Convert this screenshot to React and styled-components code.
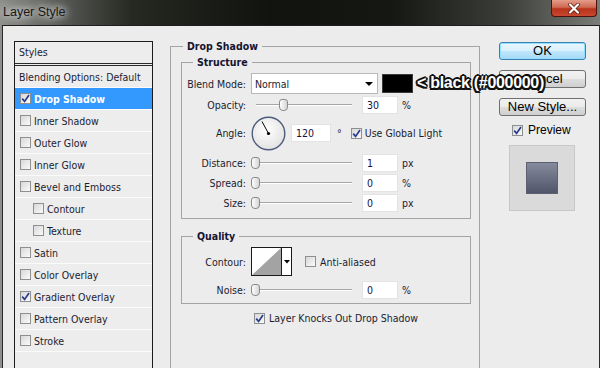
import React from 'react';
import styled, { createGlobalStyle, css } from 'styled-components';

const UI_FONT = `"DejaVu Sans Condensed", "DejaVu Sans", sans-serif`;
const BTN_FONT = `"Liberation Sans", Arial, sans-serif`;

const GlobalStyle = createGlobalStyle`
  html, body { margin: 0; padding: 0; background: #ececec; }
  body { width: 600px; height: 368px; overflow: hidden; }
`;

const Window = styled.div`
  width: 600px;
  height: 368px;
  display: flex;
  flex-direction: column;
  overflow: hidden;
  background: linear-gradient(90deg, #8e908c 0%, #5c5f5a 9%, #262922 22%, #10130e 45%, #141712 65%, #3a3d38 84%, #7a7c78 100%);
  font-family: ${UI_FONT};
  font-stretch: condensed;
  font-size: 10.5px;
  color: #1c1c30;
`;

const TitleBar = styled.div`
  height: 25px;
  flex: none;
  display: flex;
  align-items: flex-start;
  justify-content: space-between;
`;

const Title = styled.div`
  margin: 5px 0 0 3px;
  font-family: ${BTN_FONT};
  font-size: 12.5px;
  color: #161616;
  text-shadow: 0 0 6px #e6e6e6, 0 0 10px #d0d0d0, 0 0 14px #bdbdbd;
`;

const CloseButton = styled.div`
  width: 46px;
  height: 17px;
  margin-right: 3px;
  box-sizing: border-box;
  border: 1px solid #4a140c;
  border-top: none;
  border-radius: 0 0 4px 4px;
  background: linear-gradient(#e39c88 0%, #cf6a52 45%, #b8321c 55%, #c9482e 100%);
  display: flex;
  align-items: center;
  justify-content: center;
`;

const Body = styled.div`
  flex: 1;
  position: relative;
  display: flex;
  align-items: flex-start;
  margin-left: 2px;
  padding-left: 11px;
  background: #ececec;
  border-top: 1px solid #1e1e1e;
  border-left: 1px solid #2a2a2a;
  border-right: 1px solid #2a2a2a;
  overflow: hidden;
`;

/* ---- left styles list ---- */

const StylesPanel = styled.div`
  flex: none;
  width: 139px;
  height: 400px;
  margin-top: 15px;
  box-sizing: border-box;
  border: 1px solid #1c1c1c;
  background: #ededed;
`;

const PanelHeader = styled.div`
  height: 21px;
  line-height: 21px;
  padding-left: 4px;
  border-bottom: 3px double #2a2a2a;
`;

const StyleRow = styled.div`
  height: 21px;
  display: flex;
  align-items: center;
  gap: 3px;
  padding-left: ${p => p.$indent}px;
  border-bottom: 1px solid #fbfbfb;
  ${p => p.$selected && css`
    background: #3399ff;
    color: #fff;
    font-weight: bold;
  `}
`;

/* ---- group boxes ---- */

const Group = styled.fieldset`
  margin: 0;
  padding: 0;
  box-sizing: border-box;
  border: 1px solid #a4a4a4;
  min-width: 0;
`;

const MainGroup = styled(Group)`
  flex: none;
  width: 310px;
  height: 420px;
  margin: 13px 0 0 17px;
`;

const SubGroup = styled(Group)`
  width: 290px;
  margin: ${p => p.$top}px 0 0 10px;
  padding-bottom: ${p => p.$bottom}px;
`;

const Legend = styled.legend`
  margin-left: ${p => p.$offset}px;
  padding: 0 4px;
  line-height: 14px;
  font-weight: bold;
  color: #141430;
`;

const Row = styled.div`
  display: flex;
  align-items: center;
  height: ${p => p.$h}px;
  margin-top: ${p => p.$mt || 0}px;
`;

const Label = styled.div`
  flex: none;
  width: 64px;
  margin-right: 5px;
  text-align: right;
`;

const Select = styled.div`
  flex: none;
  width: 127px;
  height: 21px;
  box-sizing: border-box;
  display: flex;
  align-items: center;
  justify-content: space-between;
  padding: 0 4px 0 3px;
  background: #fff;
  border: 1px solid #b9b9b9;
`;

const DownArrow = styled.span`
  width: 0;
  height: 0;
  border-left: 4px solid transparent;
  border-right: 4px solid transparent;
  border-top: 4px solid #000;
`;

const Swatch = styled.div`
  flex: none;
  width: 31px;
  height: 19px;
  margin-left: 4px;
  box-sizing: border-box;
  background: #000;
  border: 1px solid #3a3a3a;
`;

const SliderWrap = styled.div`
  position: relative;
  flex: none;
  width: 101px;
  height: 14px;
`;

const Track = styled.div`
  position: absolute;
  left: 5px;
  right: 0;
  top: 6px;
  height: 1px;
  background: #a6a6a6;
  border-bottom: 1px solid #fff;
`;

const Thumb = styled.div`
  position: absolute;
  top: 1px;
  width: 9px;
  height: 12px;
  box-sizing: border-box;
  border: 1px solid #8a8a8a;
  border-radius: 3px 3px 4px 4px;
  background: linear-gradient(90deg, #fdfdfd, #d6d6d6);
`;

const NumberBox = styled.div`
  flex: none;
  width: ${p => p.$w || 36}px;
  height: 18px;
  margin-left: ${p => p.$ml ?? 10}px;
  box-sizing: border-box;
  padding-left: 4px;
  line-height: 17px;
  background: #fff;
  border: 1px solid #e3e3e3;
  color: #141440;
`;

const Unit = styled.span`
  margin-left: ${p => p.$ml ?? 4}px;
`;

const Box = styled.span`
  flex: none;
  width: 11px;
  height: 11px;
  box-sizing: border-box;
  border: 1px solid #8e8f8f;
  background: linear-gradient(135deg, #d8d8d8, #fafafa);
  display: inline-flex;
  align-items: center;
  justify-content: center;
  margin-left: ${p => p.$ml || 0}px;
`;

const CheckText = styled.span`
  margin-left: ${p => p.$ml ?? 3}px;
`;

const ContourPicker = styled.div`
  flex: none;
  display: flex;
  width: 41px;
  height: 29px;
  box-sizing: border-box;
  border: 1px solid #1a1a1a;
  background: #fff;
`;

const ContourPreview = styled.div`
  width: 29px;
  height: 100%;
  border-right: 1px solid #1a1a1a;
`;

const ContourArrow = styled.div`
  flex: 1;
  display: flex;
  align-items: center;
  justify-content: center;
`;

const KnockRow = styled.div`
  display: flex;
  align-items: center;
  height: 14px;
  margin: 7px 0 0 83px;
`;

/* ---- right column ---- */

const SideColumn = styled.div`
  flex: none;
  width: 87px;
  margin: 16px 0 0 19px;
  display: flex;
  flex-direction: column;
  align-items: flex-start;
`;

const Button = styled.div`
  width: 87px;
  height: 18px;
  box-sizing: border-box;
  margin-bottom: 10px;
  border: 1px solid #707070;
  border-radius: 3px;
  background: linear-gradient(#f2f2f2 0%, #ebebeb 48%, #dddddd 52%, #cfcfcf 100%);
  font-family: ${BTN_FONT};
  font-size: 13px;
  line-height: 16px;
  text-align: center;
  color: #000;
  ${p => p.$primary && css`
    border-color: #3c7fb1;
    background: linear-gradient(#eaf6fd 0%, #d9f0fc 48%, #bee6fd 52%, #a7d9f5 100%);
    box-shadow: inset 0 0 0 1px #8fe0ff;
  `}
`;

const PreviewToggle = styled.div`
  display: flex;
  align-items: center;
  height: 12px;
  margin: -2px 0 0 13px;
  font-family: ${BTN_FONT};
  font-size: 12px;
  color: #000;
`;

const PreviewBox = styled.div`
  width: 66px;
  height: 66px;
  margin: 9px 0 0 10px;
  box-sizing: border-box;
  background: #dadada;
  border: 1px solid #c8c8c8;
  display: flex;
  align-items: center;
  justify-content: center;
`;

const PreviewSquare = styled.div`
  width: 32px;
  height: 32px;
  box-sizing: border-box;
  border: 1px solid #5c6072;
  background: linear-gradient(#858a9c, #51556a);
`;

const Annotation = styled.div`
  position: absolute;
  left: 414px;
  top: 47px;
  font-family: ${BTN_FONT};
  font-weight: bold;
  font-size: 16px;
  line-height: 20px;
  letter-spacing: -0.3px;
  color: #fff;
  white-space: nowrap;
  text-shadow:
    -1.5px -1.5px 0 #111, 1.5px -1.5px 0 #111, -1.5px 1.5px 0 #111, 1.5px 1.5px 0 #111,
    0 -2px 0 #111, 0 2px 0 #111, -2px 0 0 #111, 2px 0 0 #111;
`;

const CheckBox = ({ checked, ml }) => (
  <Box $ml={ml}>
    {checked && (
      <svg width="9" height="9" viewBox="0 0 9 9">
        <path d="M1.2 4.6 L3.6 7.4 L8 1" fill="none" stroke="#2b3b8e" strokeWidth="1.7" />
      </svg>
    )}
  </Box>
);

const Slider = ({ value }) => (
  <SliderWrap>
    <Track />
    <Thumb style={{ left: Math.round(value * 0.93) }} />
  </SliderWrap>
);

const Dial = () => (
  <svg width="35" height="35" viewBox="0 0 35 35" style={{ flex: 'none' }}>
    <defs>
      <radialGradient id="dialFill" cx="45%" cy="40%" r="60%">
        <stop offset="0%" stopColor="#ffffff" />
        <stop offset="100%" stopColor="#e2e2e2" />
      </radialGradient>
    </defs>
    <circle cx="17.5" cy="17.5" r="16.3" fill="url(#dialFill)" stroke="#4e5c7c" strokeWidth="1.4" />
    <line x1="17.5" y1="17.5" x2="11" y2="5.5" stroke="#000" strokeWidth="1" />
    <circle cx="17.5" cy="17.5" r="1.6" fill="#000" />
  </svg>
);

const styleItems = [
  { name: 'Drop Shadow', checked: true, selected: true },
  { name: 'Inner Shadow' },
  { name: 'Outer Glow' },
  { name: 'Inner Glow' },
  { name: 'Bevel and Emboss' },
  { name: 'Contour', indent: true },
  { name: 'Texture', indent: true },
  { name: 'Satin' },
  { name: 'Color Overlay' },
  { name: 'Gradient Overlay', checked: true },
  { name: 'Pattern Overlay' },
  { name: 'Stroke' },
];

const sliderRows = [
  { label: 'Distance:', value: 1, unit: 'px', pos: 0, mt: 2 },
  { label: 'Spread:', value: 0, unit: '%', pos: 0 },
  { label: 'Size:', value: 0, unit: 'px', pos: 0 },
];

export default function App() {
  return (
    <>
      <GlobalStyle />
      <Window>
        <TitleBar>
          <Title>Layer Style</Title>
          <CloseButton>
            <svg width="14" height="11" viewBox="0 0 14 11">
              <path d="M3 1.5 L11 9.5 M11 1.5 L3 9.5" stroke="#5a1608" strokeWidth="3.6" strokeLinecap="round" />
              <path d="M3 1.5 L11 9.5 M11 1.5 L3 9.5" stroke="#ffffff" strokeWidth="2.2" strokeLinecap="round" />
            </svg>
          </CloseButton>
        </TitleBar>

        <Body>
          <StylesPanel>
            <PanelHeader>Styles</PanelHeader>
            <StyleRow $indent={4}>Blending Options: Default</StyleRow>
            {styleItems.map(item => (
              <StyleRow key={item.name} $indent={item.indent ? 18 : 5} $selected={item.selected}>
                <CheckBox checked={item.checked} />
                <span>{item.name}</span>
              </StyleRow>
            ))}
          </StylesPanel>

          <MainGroup>
            <Legend $offset={12}>Drop Shadow</Legend>

            <SubGroup $top={2} $bottom={5}>
              <Legend $offset={11}>Structure</Legend>
              <Row $h={21} $mt={4}>
                <Label>Blend Mode:</Label>
                <Select>
                  <span>Normal</span>
                  <DownArrow />
                </Select>
                <Swatch />
              </Row>
              <Row $h={20} $mt={1}>
                <Label>Opacity:</Label>
                <Slider value={30} />
                <NumberBox>30</NumberBox>
                <Unit>%</Unit>
              </Row>
              <Row $h={36}>
                <Label>Angle:</Label>
                <Dial />
                <NumberBox $w={40} $ml={5}>120</NumberBox>
                <Unit $ml={6}>°</Unit>
                <CheckBox checked ml={9} />
                <CheckText>Use Global Light</CheckText>
              </Row>
              {sliderRows.map(r => (
                <Row key={r.label} $h={20} $mt={r.mt}>
                  <Label>{r.label}</Label>
                  <Slider value={r.pos} />
                  <NumberBox>{r.value}</NumberBox>
                  <Unit>{r.unit}</Unit>
                </Row>
              ))}
            </SubGroup>

            <SubGroup $top={10} $bottom={4}>
              <Legend $offset={11}>Quality</Legend>
              <Row $h={29} $mt={4}>
                <Label>Contour:</Label>
                <ContourPicker>
                  <ContourPreview>
                    <svg width="29" height="27" viewBox="0 0 29 27">
                      <polygon points="0,27 29,0 29,27" fill="#a3a3a3" />
                    </svg>
                  </ContourPreview>
                  <ContourArrow>
                    <svg width="6" height="4" viewBox="0 0 6 4">
                      <polygon points="0,0 6,0 3,3.5" fill="#000" />
                    </svg>
                  </ContourArrow>
                </ContourPicker>
                <CheckBox ml={13} />
                <CheckText $ml={4}>Anti-aliased</CheckText>
              </Row>
              <Row $h={18} $mt={5}>
                <Label>Noise:</Label>
                <Slider value={0} />
                <NumberBox>0</NumberBox>
                <Unit>%</Unit>
              </Row>
            </SubGroup>

            <KnockRow>
              <CheckBox checked />
              <CheckText $ml={4}>Layer Knocks Out Drop Shadow</CheckText>
            </KnockRow>
          </MainGroup>

          <SideColumn>
            <Button $primary>OK</Button>
            <Button>Cancel</Button>
            <Button>New Style...</Button>
            <PreviewToggle>
              <CheckBox checked />
              <CheckText $ml={5}>Preview</CheckText>
            </PreviewToggle>
            <PreviewBox>
              <PreviewSquare />
            </PreviewBox>
          </SideColumn>

          <Annotation>&lt; black (#000000)</Annotation>
        </Body>
      </Window>
    </>
  );
}
